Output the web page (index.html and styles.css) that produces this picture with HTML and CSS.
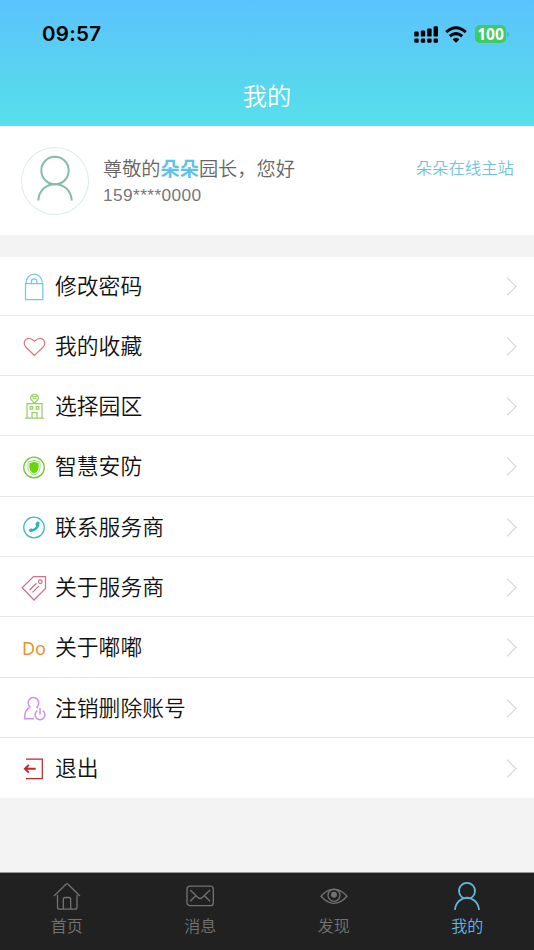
FILE: index.html
```html
<!DOCTYPE html>
<html lang="zh-CN">
<head>
<meta charset="utf-8">
<meta name="viewport" content="width=device-width, initial-scale=1">
<title>我的</title>
<link rel="stylesheet" href="styles.css">
</head>
<body>
<div class="app">
  <header class="header">
    <div class="status">
      <span class="time">09:57</span>
      <div class="indicators">
        <svg class="signal" width="25" height="17" viewBox="0 0 25 17"><rect x="0.3" y="5.4" width="4.4" height="5.2" rx="1.2"/><rect x="6.8" y="4.4" width="4.4" height="6.2" rx="1.2"/><rect x="13.2" y="2.4" width="4.4" height="8.2" rx="1.2"/><rect x="19.6" y="0.3" width="4.4" height="10.3" rx="1.2"/><rect x="0.3" y="12.5" width="4.4" height="4.2" rx="1.2"/><rect x="6.8" y="12.5" width="4.4" height="4.2" rx="1.2"/><rect x="13.2" y="12.5" width="4.4" height="4.2" rx="1.2"/><rect x="19.6" y="12.5" width="4.4" height="4.2" rx="1.2"/></svg>
        <svg class="wifi" width="22" height="17" viewBox="0 0 22 17"><path d="M1.2 6.1Q11-2.7 20.8 6.1M4.8 10.2Q11 5 17.2 10.2" fill="none" stroke="#000" stroke-width="3"/><path d="M7.5 13.200Q11 10.200 14.500 13.200L11 16.700Z"/></svg>
        <span class="battery">100</span>
        <span class="battery-tip"></span>
      </div>
    </div>
    <h1 class="title">我的</h1>
  </header>

  <section class="profile">
    <div class="avatar">
      <svg width="68" height="68" viewBox="0 0 68 68"><circle cx="34" cy="23.5" r="13.7"/><path d="M17.3 53.5C18.5 31.8 49.5 31.8 50.7 53.5"/></svg>
    </div>
    <div class="who">
      <p class="greeting">尊敬的<b>朵朵</b>园长，您好</p>
      <p class="phone">159****0000</p>
    </div>
    <a class="site">朵朵在线主站</a>
  </section>

  <main class="menu">
    <div class="row"><svg class="icon lock" viewBox="0 0 28 28"><path d="M5.500 10.500h17.300V26.500H5.500zM6 10.500C6-2 22.300-2 22.300 10.500M11.500 10.500V8.500a2.700 2.700 0 0 1 5.400 0v2"/></svg><span class="label">修改密码</span><i class="arrow"></i></div>
    <div class="row"><svg class="icon heart" viewBox="0 0 28 28"><path d="M14.500 23.500L5.800 15C.8 9.500 8.500 2.500 14.500 9.200 20.500 2.500 28.200 9.500 23.200 15z"/></svg><span class="label">我的收藏</span><i class="arrow"></i></div>
    <div class="row"><svg class="icon campus" viewBox="0 0 28 28"><path d="M5 26h19M7 26V11.500h15V26M12 26v-5.500h5V26M10.200 14.500h2.500v2.500h-2.500zM16.300 14.500h2.500v2.500h-2.500zM14.500 11.500L11 7.500C8.500.8 20.500.8 18 7.500zM12 4.600h5M12.500 6.500h4"/></svg><span class="label">选择园区</span><i class="arrow"></i></div>
    <div class="row"><svg class="icon shield" viewBox="0 0 28 28"><circle cx="14" cy="14.500" r="10.300"/><path stroke-width="0.700" d="M14 7.300L20 9.200V14.500C20 18.700 16.800 21 14 22 11.200 21 8 18.700 8 14.500V9.200z"/><path d="M14 8.800l4.600 1.500v4.200c0 3-2.200 4.900-4.600 6-2.400-1.100-4.600-3-4.600-6v-4.200z" fill="#66d50a" stroke="none"/></svg><span class="label">智慧安防</span><i class="arrow"></i></div>
    <div class="row"><svg class="icon call" viewBox="0 0 28 28"><circle cx="14" cy="14.500" r="10.300"/><path d="M17.300 9l1.700.8c.4 4.500-4 8.800-8.600 8.700l-1-1.400 1.900-1.100 1.200.7c2-.4 3.900-2.500 4.300-4.300l-.8-1.200z" fill="#2bb1c6" stroke="#2bb1c6" stroke-width="1.200"/></svg><span class="label">联系服务商</span><i class="arrow"></i></div>
    <div class="row"><svg class="icon tag" viewBox="0 0 28 28"><path d="M2.200 14.800L13.500 3.500H25.500v12L14 27z"/><circle cx="20.300" cy="8.700" r="1.800"/><path d="M9.500 17.200l7-7M12.500 19.400l6.500-6.500"/></svg><span class="label">关于服务商</span><i class="arrow"></i></div>
    <div class="row"><span class="icon icon-do">Do</span><span class="label">关于嘟嘟</span><i class="arrow"></i></div>
    <div class="row"><svg class="icon account" viewBox="0 0 28 28"><path d="M10.400 13.200A5.300 5.300 0 1 1 16.500 13.200M10.400 13.200C6.500 14.500 4.600 18 4.600 24.800H14M16.500 13.200l1.500 1M17.300 16.700a4.900 4.900 0 1 0 5.400 0M20 14v6.500"/></svg><span class="label">注销删除账号</span><i class="arrow"></i></div>
    <div class="row"><svg class="icon exit" viewBox="0 0 28 28"><path d="M6 5.200H22.300V24.500H6"/><path stroke-width="1.900" d="M15.700 14.800H5M8.800 10.900L4.900 14.800l3.900 3.900"/></svg><span class="label">退出</span><i class="arrow"></i></div>
  </main>

  <nav class="tabs">
    <a class="tab"><svg viewBox="0 0 30 30"><path d="M2 15L14.200 3Q15 2.300 15.800 3L28 15M5.500 14V26Q5.500 28.200 7.700 28.200H22.800Q25 28.200 25 26V14M11.300 28V18.500Q11.300 16.500 13.300 16.500H16.700Q18.700 16.500 18.700 18.500V28"/></svg><span>首页</span></a>
    <a class="tab"><svg viewBox="0 0 30 30"><rect x="2" y="5.200" width="26.300" height="19.500" rx="3"/><path d="M5.200 9l7.700 7.500q2.200 2 4.400 0L25 9M5.200 20.200l5.500-5.500M25 20.200l-5.500-5.500"/></svg><span>消息</span></a>
    <a class="tab"><svg viewBox="0 0 30 30"><path d="M2 15.200Q15 1 28 15.200 15 29.400 2 15.200z"/><circle cx="15" cy="14.300" r="6"/><circle cx="15" cy="13.800" r="2.300" fill="currentColor"/></svg><span>发现</span></a>
    <a class="tab active"><svg viewBox="0 0 30 30"><path d="M11.800 17.200A8 8 0 1 1 18.200 17.200M3 29C4 13 26 13 27 29M11.800 17.200Q15 15.800 18.200 17.200"/></svg><span>我的</span></a>
  </nav>
</div>
</body>
</html>
```
FILE: styles.css
```css
* { box-sizing: border-box; margin: 0; padding: 0; }
body {
  font-family: "Noto Sans CJK SC", "Liberation Sans", sans-serif;
  font-weight: 350;
  background: #f3f3f3;
}
.app { display: flex; flex-direction: column; height: 950px; overflow: hidden; }

.header {
  height: 126px;
  flex: none;
  background: linear-gradient(#5bc3fd, #59d2f0 55%, #56e0ec);
}
.status {
  display: flex;
  justify-content: space-between;
  align-items: center;
  height: 68px;
  padding: 0 25px 0 42px;
}
.time { font: 600 20.500px/24px Inter, sans-serif; letter-spacing: 0.3px; }
.indicators { display: flex; align-items: center; }
.wifi { margin: 0 8px 0 6px; }
.battery {
  width: 31px;
  height: 18px;
  border-radius: 5px;
  background: #3dcb64;
  color: #fff;
  font: 700 15.500px/18px "Noto Sans", sans-serif;
  text-align: center;
}
.battery-tip { width: 2px; height: 5px; margin-left: 1px; border-radius: 0 2px 2px 0; background: #3dcb8b; }
.title {
  font-size: 24.300px;
  line-height: 36px;
  font-weight: 350;
  color: #fff;
  text-align: center;
  padding-top: 9px;
}

.profile {
  display: flex;
  flex: none;
  height: 109px;
  padding: 21px 20px 0 21px;
  background: #fff;
}
.avatar { width: 68px; height: 68px; border-radius: 50%; box-shadow: inset 0 0 0 1px #dcece7; }
.avatar svg { display: block; fill: none; stroke: #82bda6; stroke-width: 2; }
.who { flex: 1; padding: 6px 0 0 14px; color: #666; }
.greeting { font-size: 19.200px; line-height: 30px; }
.greeting b { color: #5ec2ef; }
.phone { font: 400 17.300px/24px "Liberation Sans", sans-serif; letter-spacing: 0.400px; color: #777; }
.site { padding-top: 7px; font-size: 16.400px; line-height: 26px; color: #72c3e2; }

.menu { flex: none; margin-top: 22px; background: #fff; }
.row {
  display: flex;
  align-items: center;
  height: 60.330px;
  padding: 1.500px 17px 0 20px;
  border-bottom: 1px solid #e6e6e6;
}
.row:first-child { height: 58.700px; }
.row:last-child { border-bottom: 0; padding-top: 0.500px; }
.icon {
  width: 28px;
  height: 28px;
  flex: none;
  fill: none;
  stroke: currentColor;
  stroke-width: 1.250;
}
.lock { color: #72c9e7; }
.heart { color: #d87884; }
.campus { color: #9bce6c; }
.shield { color: #70c63c; }
.call { color: #42b9c7; }
.tag { color: #d46e89; }
.account { color: #cb91ec; stroke-width: 1.500; }
.exit { color: #c9232b; }
.icon-do { color: #ee922e; font: 400 18px/28px "Noto Sans", sans-serif; text-align: center; }
.label { flex: 1; padding: 0 0 3px 7px; font-size: 21.800px; line-height: 32px; color: #111; }
.arrow {
  width: 13px;
  height: 13px;
  margin-right: 3px;
  border-top: 1.500px solid #d2d2d2;
  border-right: 1.500px solid #d2d2d2;
  transform: rotate(45deg);
}

.tabs {
  display: flex;
  flex: none;
  height: 78px;
  margin-top: auto;
  border-top: 1px solid #999;
  background: #212121;
}
.tab {
  flex: 1;
  display: flex;
  flex-direction: column;
  align-items: center;
  padding-top: 8px;
  font-size: 16px;
  line-height: 24px;
  color: #737373;
}
.tab svg { width: 30px; height: 30px; margin-bottom: 2px; fill: none; stroke: currentColor; stroke-width: 1.300; }
.tab.active { color: #5fb9e2; }
.tab.active svg { stroke-width: 1.700; }
```
